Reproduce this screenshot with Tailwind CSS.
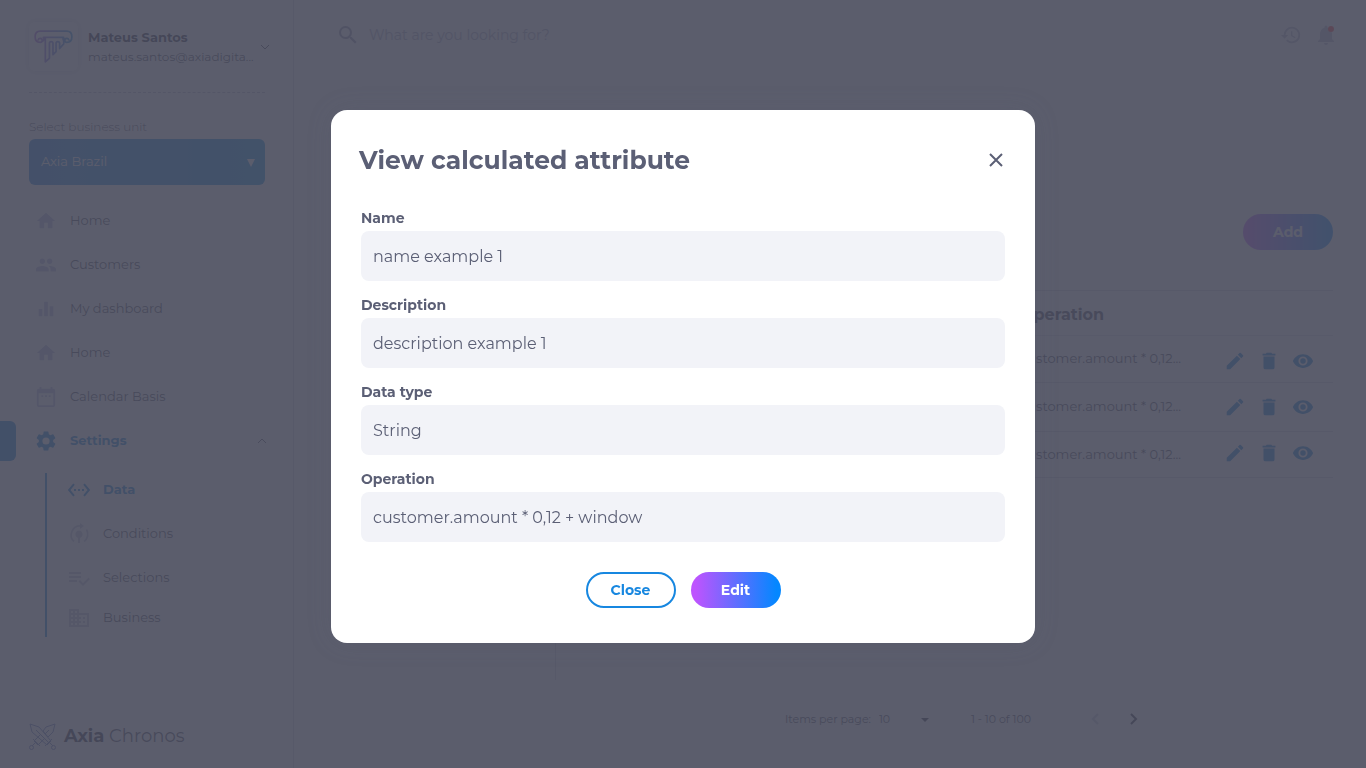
<!DOCTYPE html>
<html lang="en">
<head>
<meta charset="utf-8">
<meta name="viewport" content="width=device-width, initial-scale=1">
<title>Axia Chronos</title>
<script src="https://cdn.jsdelivr.net/npm/@tailwindcss/browser@4"></script>
</head>
<body class="font-['Montserrat','Inter',sans-serif] text-[#3c3d50]">
<svg class="absolute size-0" aria-hidden="true">
  <defs>
    <linearGradient id="brand" gradientUnits="userSpaceOnUse" x1="6" x2="42" y1="0" y2="0"><stop offset="0" stop-color="#a85cd8"/><stop offset="1" stop-color="#2b94e0"/></linearGradient>
    <symbol id="home" viewBox="0 0 24 24"><path d="M10 20v-6h4v6h5v-8h3L12 3 2 12h3v8z"/></symbol>
    <symbol id="people" viewBox="0 0 24 24"><path d="M16 11c1.66 0 2.99-1.34 2.99-3S17.66 5 16 5s-3 1.340-3 3 1.340 3 3 3zm-8 0c1.660 0 2.990-1.340 2.990-3S9.660 5 8 5 5 6.340 5 8s1.340 3 3 3zm0 2c-2.330 0-7 1.170-7 3.500V19h14v-2.500C15 14.170 10.330 13 8 13zm8 0c-.29 0-.62.02-.97.05C16.190 13.890 17 15.020 17 16.500V19h6v-2.500c0-2.330-4.670-3.500-7-3.500z"/></symbol>
    <symbol id="bars" viewBox="0 0 24 24"><path d="M4 12h4v8H4zM10 4h4v16h-4zM16 9h4v11h-4z"/></symbol>
    <symbol id="calendar" viewBox="0 0 24 24"><path d="M20 3h-1V1h-2v2H7V1H5v2H4a2 2 0 0 0-2 2v16a2 2 0 0 0 2 2h16a2 2 0 0 0 2-2V5a2 2 0 0 0-2-2zm0 18H4V8h16zM7 10h2v2H7zm4 0h2v2h-2zm4 0h2v2h-2z"/></symbol>
    <symbol id="gear" viewBox="0 0 24 24"><path d="M19.140 12.940c.04-.3.06-.61.06-.94 0-.32-.02-.64-.07-.94l2.030-1.580a.49.49 0 0 0 .12-.61l-1.920-3.320a.488.488 0 0 0-.59-.22l-2.390.96c-.5-.38-1.030-.7-1.620-.94l-.36-2.540a.484.484 0 0 0-.48-.41h-3.840c-.24 0-.43.17-.47.41l-.36 2.540c-.59.24-1.130.57-1.620.94l-2.390-.96a.488.488 0 0 0-.59.22L2.740 8.870c-.12.21-.08.47.12.61l2.030 1.580c-.05.3-.09.63-.09.94s.02.64.07.94l-2.030 1.580a.49.49 0 0 0-.12.61l1.920 3.320c.12.22.37.29.59.22l2.390-.96c.5.38 1.030.7 1.620.94l.36 2.540c.05.24.24.41.48.41h3.840c.24 0 .44-.17.47-.41l.36-2.540c.59-.24 1.130-.56 1.620-.94l2.390.96c.22.08.47 0 .59-.22l1.920-3.320a.49.49 0 0 0-.12-.61zM12 15.600A3.600 3.600 0 1 1 12 8.400a3.600 3.600 0 0 1 0 7.200z"/></symbol>
    <symbol id="ethernet" viewBox="0 0 24 24"><path d="M7.770 6.760 6.230 5.480.82 12l5.410 6.520 1.540-1.280L3.420 12zM7 13h2v-2H7zm10-2h-2v2h2zm-6 2h2v-2h-2zm6.770-7.520-1.540 1.280L20.580 12l-4.350 5.240 1.540 1.280L23.180 12z"/></symbol>
    <symbol id="tree" viewBox="0 0 24 24"><path d="M12 8.500a3.800 3.800 0 0 0-1 7.400V21h2v-5.100a3.800 3.800 0 0 0-1-7.400z"/><path d="M7 19.500A9 9 0 0 1 14 4M17 19.500a9 9 0 0 0 2.500-12" fill="none" stroke="#c1c4d8" stroke-width="1.800"/><path d="M13 1l4 3-4 3z"/></symbol>
    <symbol id="check-list" viewBox="0 0 24 24"><path d="M14 10H2v2h12zm0-4H2v2h12zM2 16h8v-2H2zm19.500-4.500L23 13l-6.990 7-4.510-4.500L13 14l3.010 3z"/></symbol>
    <symbol id="building" viewBox="0 0 24 24"><path d="M12 7V3H2v18h20V7zM6 19H4v-2h2zm0-4H4v-2h2zm0-4H4V9h2zm0-4H4V5h2zm4 12H8v-2h2zm0-4H8v-2h2zm0-4H8V9h2zm0-4H8V5h2zm10 12h-8v-2h2v-2h-2v-2h2v-2h-2V9h8zm-2-8h-2v2h2zm0 4h-2v2h2z"/></symbol>
    <symbol id="pencil" viewBox="0 0 24 24"><path d="M3 17.250V21h3.750L17.810 9.940l-3.750-3.750zM20.710 7.040a1 1 0 0 0 0-1.410l-2.340-2.340a1 1 0 0 0-1.410 0l-1.830 1.830 3.750 3.750z"/></symbol>
    <symbol id="trash" viewBox="0 0 24 24"><path d="M6 19a2 2 0 0 0 2 2h8a2 2 0 0 0 2-2V7H6zM19 4h-3.500l-1-1h-5l-1 1H5v2h14z"/></symbol>
    <symbol id="eye" viewBox="0 0 24 24"><path d="M12 4.500C7 4.500 2.730 7.610 1 12c1.730 4.390 6 7.500 11 7.500s9.270-3.110 11-7.500c-1.730-4.390-6-7.500-11-7.500zM12 17a5 5 0 1 1 0-10 5 5 0 0 1 0 10zm0-8a3 3 0 1 0 0 6 3 3 0 0 0 0-6z"/></symbol>
  </defs>
</svg>

<div class="flex min-h-screen bg-white" inert>
  <aside class="flex w-[294px] shrink-0 flex-col border-r border-[#d4d5e0]">
    <div class="pt-[22px] pr-7 pl-[29px]">
      <div class="flex items-center gap-2.5">
        <svg class="size-[49px] shrink-0 rounded-md shadow-[0_0_6px_2px_rgba(60,60,90,0.15)]" viewBox="0 0 48 48" fill="none" stroke="url(#brand)" stroke-width="1.700" stroke-linecap="round" stroke-linejoin="round" aria-hidden="true">
          <path d="M9 17.500a2 2 0 1 1 2 2.500c-3 0-5-2-5-5.500s2-5.500 5-5.500h26c3 0 5 2 5 5.500s-2 5.500-5 5.500a2 2 0 1 1 2-2.500M13 19c2-1 2-3 1-4h20c-1 1-1 3 1 4M16 16v23l4-3.500V21c0-2.500 3.500-2.500 3.500 0v11l3-3V21c0-2.500 3.500-2.500 3.500 0v5l4-4.500V16"/>
        </svg>
        <div class="min-w-0 flex-1 leading-5">
          <p class="text-[13px] font-bold text-[#26273a]">Mateus Santos</p>
          <p class="text-xs leading-5 whitespace-nowrap">mateus.santos@axiadigita...</p>
        </div>
        <svg class="-mr-1 size-2 shrink-0" viewBox="0 0 8 8" fill="none" stroke="#3c3d50" aria-hidden="true"><path d="M0 2l4 4 4-4"/></svg>
      </div>
      <hr class="mt-[21px] border-t border-dashed border-[#b5b6c6]">
      <label for="unit" class="mt-6 block text-xs leading-5 font-light">Select business unit</label>
      <div class="relative mt-0.5">
        <select id="unit" class="block h-[46px] w-full appearance-none rounded-md bg-linear-to-r from-[#177ed9] to-[#008be0] px-3 text-[13px] text-white"><option>Axia Brazil</option></select>
        <svg class="pointer-events-none absolute top-5 right-2.5 size-2" viewBox="0 0 8 8" fill="#fff" aria-hidden="true"><path d="M0 0h8L4 8z"/></svg>
      </div>
    </div>
    <nav class="mt-3.5 text-[13px]">
      <a href="#" class="flex h-11 items-center gap-[13px] pl-[35px]"><svg class="size-[22px] fill-[#b3b7da]"><use href="#home"/></svg>Home</a>
      <a href="#" class="flex h-11 items-center gap-[13px] pl-[35px]"><svg class="size-[22px] fill-[#b3b7da]"><use href="#people"/></svg>Customers</a>
      <a href="#" class="flex h-11 items-center gap-[13px] pl-[35px]"><svg class="size-[22px] fill-[#b3b7da]"><use href="#bars"/></svg>My dashboard</a>
      <a href="#" class="flex h-11 items-center gap-[13px] pl-[35px]"><svg class="size-[22px] fill-[#b3b7da]"><use href="#home"/></svg>Home</a>
      <a href="#" class="flex h-11 items-center gap-[13px] pl-[35px]"><svg class="size-[22px] fill-[#b3b7da]"><use href="#calendar"/></svg>Calendar Basis</a>
      <a href="#" class="flex h-11 items-center pr-[26px] font-bold text-[#0078d2]">
        <span class="h-10 w-4 rounded-r-md bg-[#0078d2]"></span>
        <svg class="mr-3 ml-[18px] size-6 fill-[#0078d2]"><use href="#gear"/></svg>
        <span class="flex-1">Settings</span>
        <svg class="size-2.5" viewBox="0 0 10 10" fill="none" stroke="#55566c" aria-hidden="true"><path d="M1 7l4-4 4 4"/></svg>
      </a>
      <div class="mt-2.5 ml-[45px] border-l-2 border-[#0078d2] pl-5">
        <a href="#" class="flex h-[34px] items-center gap-3 font-bold text-[#0078d2]"><svg class="size-6 fill-[#0078d2]"><use href="#ethernet"/></svg>Data</a>
        <a href="#" class="mt-1 flex h-[46px] items-center gap-3"><svg class="size-6 fill-[#c1c4d8]"><use href="#tree"/></svg>Conditions</a>
        <a href="#" class="flex h-[42px] items-center gap-3"><svg class="size-6 fill-[#c1c4d8]"><use href="#check-list"/></svg>Selections</a>
        <a href="#" class="flex h-[38px] items-center gap-3"><svg class="size-6 fill-[#c1c4d8]"><use href="#building"/></svg>Business</a>
      </div>
    </nav>
    <div class="mt-auto flex items-center gap-2 pb-[18px] pl-[29px]">
      <svg class="size-[27px]" viewBox="0 0 27 27" fill="none" stroke="#6479b8" stroke-width="1" stroke-linejoin="round" aria-hidden="true">
        <path d="M1 1l9 3 12 14-4 4L3 9zM26 1l-9 3-3 4 5 6 5-5zM7 7l13 13M11 12l-6 6 4 4 6-6M4 16l7 7M23 16l-7 7M6 20l-3 3M21 20l3 3M20 7l-4 4"/><circle cx="2.500" cy="24.500" r="2"/><circle cx="24.500" cy="24.500" r="2"/>
      </svg>
      <p class="text-lg leading-7"><b class="font-bold text-[#26273a]">Axia</b> Chronos</p>
    </div>
  </aside>

  <div class="flex min-w-0 flex-1 flex-col bg-[#f9f9fc]">
    <header class="flex h-[70px] items-center justify-between bg-white pr-7 pl-8">
      <div class="flex h-[46px] w-[424px] items-center gap-[9px] rounded-md bg-[#f7f7fb] pl-2.5">
        <svg class="size-6 fill-[#8f91a8]" viewBox="0 0 24 24" aria-hidden="true"><path d="M15.500 14h-.79l-.28-.27A6.471 6.471 0 0 0 16 9.500 6.500 6.500 0 1 0 9.500 16c1.610 0 3.090-.59 4.230-1.570l.27.28v.79l5 4.990L20.490 19l-4.990-5zM9.500 14a4.500 4.500 0 1 1 0-9 4.500 4.500 0 0 1 0 9z"/></svg>
        <input type="search" aria-label="Search" placeholder="What are you looking for?" class="flex-1 bg-transparent text-sm placeholder:text-[#a6a8bc]">
      </div>
      <div class="flex items-center gap-3">
        <button aria-label="History"><svg class="block size-[22px] fill-[#b3b5c8]" viewBox="0 0 24 24"><path d="M13 3a9 9 0 0 0-9 9H1l3.890 3.890.07.14L9 12H6a7 7 0 1 1 2.060 4.940l-1.420 1.420A9 9 0 1 0 13 3zm-1 5v5l4.280 2.540.72-1.210-3.500-2.080V8z"/></svg></button>
        <button aria-label="Notifications"><svg class="block size-6 fill-[#b3b5c8]" viewBox="0 0 24 24"><path d="M12 22a2 2 0 0 0 2-2h-4a2 2 0 0 0 2 2zm6-6v-5c0-3.070-1.640-5.640-4.500-6.320V4a1.500 1.500 0 0 0-3 0v.68C7.630 5.360 6 7.920 6 11v5l-2 2v1h16v-1z"/><circle cx="17" cy="6" r="3" fill="#ff3030"/></svg></button>
      </div>
    </header>

    <main class="flex flex-1 flex-col pr-[33px]">
      <div class="flex justify-end pt-36">
        <button class="h-9 w-[90px] rounded-full bg-linear-to-r/srgb from-[#bd54fe] from-5% to-[#0487ff] to-95% text-sm font-bold text-white">Add</button>
      </div>
      <div class="mt-10 flex min-h-[390px]">
        <div class="w-[262px] shrink-0 border-r border-[#d3d4df]"></div>
        <div class="flex-1 pl-8">
          <table class="w-full border-t border-[#d3d4df] text-left">
            <thead><tr class="h-[45px] border-b border-[#e0e1ea]"><th scope="col" class="pt-1 pl-[432px] text-base font-bold">Operation</th><th class="w-[114px]"></th></tr></thead>
            <tbody class="text-[13px]">
              <tr class="h-[47px] border-b border-[#d3d4df]"><td class="pl-[432px] whitespace-nowrap">customer.amount * 0,12...</td><td class="pt-1">
                <div class="flex justify-end gap-3 pr-[19px]"><button aria-label="Edit"><svg class="block size-[22px] fill-[#0078d2]"><use href="#pencil"/></svg></button><button aria-label="Delete"><svg class="block size-[22px] fill-[#0078d2]"><use href="#trash"/></svg></button><button aria-label="View"><svg class="block size-[22px] fill-[#0078d2]"><use href="#eye"/></svg></button></div></td></tr>
              <tr class="h-[49px] border-b border-[#d3d4df]"><td class="pl-[432px] whitespace-nowrap">customer.amount * 0,12...</td><td>
                <div class="flex justify-end gap-3 pr-[19px]"><button aria-label="Edit"><svg class="block size-[22px] fill-[#0078d2]"><use href="#pencil"/></svg></button><button aria-label="Delete"><svg class="block size-[22px] fill-[#0078d2]"><use href="#trash"/></svg></button><button aria-label="View"><svg class="block size-[22px] fill-[#0078d2]"><use href="#eye"/></svg></button></div></td></tr>
              <tr class="h-[46px] border-b border-[#d3d4df]"><td class="pl-[432px] whitespace-nowrap">customer.amount * 0,12...</td><td class="pb-1">
                <div class="flex justify-end gap-3 pr-[19px]"><button aria-label="Edit"><svg class="block size-[22px] fill-[#0078d2]"><use href="#pencil"/></svg></button><button aria-label="Delete"><svg class="block size-[22px] fill-[#0078d2]"><use href="#trash"/></svg></button><button aria-label="View"><svg class="block size-[22px] fill-[#0078d2]"><use href="#eye"/></svg></button></div></td></tr>
            </tbody>
          </table>
        </div>
      </div>
      <div class="mt-auto flex items-center justify-end pr-[188px] pb-[38px] text-[11px] leading-[22px]">
        <label for="size" class="mr-2">Items per page:</label>
        <div class="relative w-[50px]">
          <select id="size" class="block w-full appearance-none bg-transparent"><option>10</option></select>
          <svg class="pointer-events-none absolute top-2.5 right-0 h-1 w-2" viewBox="0 0 8 4" fill="#26273a" aria-hidden="true"><path d="M0 0h8L4 4z"/></svg>
        </div>
        <span class="mr-[54px] ml-[42px]">1 - 10 of 100</span>
        <button aria-label="Previous page" class="mr-4"><svg class="block size-[22px]" viewBox="0 0 22 22" fill="none" stroke="#c6c8d6" stroke-width="2"><path d="M13 6l-5 5 5 5"/></svg></button>
        <button aria-label="Next page"><svg class="block size-[22px]" viewBox="0 0 22 22" fill="none" stroke="#26273a" stroke-width="2"><path d="M8 6l5 5-5 5"/></svg></button>
      </div>
    </main>
  </div>
</div>

<div class="fixed inset-0 flex items-start justify-center bg-[#494b5c]/90 pt-[110px]">
  <section role="dialog" aria-modal="true" aria-labelledby="dialog-title" class="w-full max-w-[704px] rounded-2xl bg-white px-[30px] pt-[30px] pb-[35px] text-[#5b5f75] shadow-[0_0_24px_rgba(84,88,112,0.2)]">
    <div class="-ml-0.5 flex h-10 items-center justify-between">
      <h1 id="dialog-title" class="text-[25px] leading-10 font-bold">View calculated attribute</h1>
      <button aria-label="Close dialog" class="p-0.5"><svg class="block size-[14px]" viewBox="0 0 14 14" fill="none" stroke="#5b5f75" stroke-width="2"><path d="M1 1l12 12M13 1L1 13"/></svg></button>
    </div>
    <form class="mt-[25px] flex flex-col gap-[11px]">
      <div><label for="name" class="block text-sm leading-[26px] font-bold">Name</label><input id="name" readonly value="name example 1" class="block h-[50px] w-full rounded-lg bg-[#f2f3f8] px-3 text-base"></div>
      <div><label for="description" class="block text-sm leading-[26px] font-bold">Description</label><input id="description" readonly value="description example 1" class="block h-[50px] w-full rounded-lg bg-[#f2f3f8] px-3 text-base"></div>
      <div><label for="type" class="block text-sm leading-[26px] font-bold">Data type</label><input id="type" readonly value="String" class="block h-[50px] w-full rounded-lg bg-[#f2f3f8] px-3 text-base"></div>
      <div><label for="operation" class="block text-sm leading-[26px] font-bold">Operation</label><input id="operation" readonly value="customer.amount * 0,12 + window" class="block h-[50px] w-full rounded-lg bg-[#f2f3f8] px-3 text-base"></div>
      <div class="mt-[19px] flex justify-center gap-[15px] text-sm font-bold">
        <button type="button" class="h-9 w-[90px] rounded-full border-2 border-[#1787e0] text-[#1787e0]">Close</button>
        <button type="button" class="h-9 w-[90px] rounded-full bg-linear-to-r/srgb from-[#bd54fe] from-5% to-[#0487ff] to-95% text-white">Edit</button>
      </div>
    </form>
  </section>
</div>
</body>
</html>
